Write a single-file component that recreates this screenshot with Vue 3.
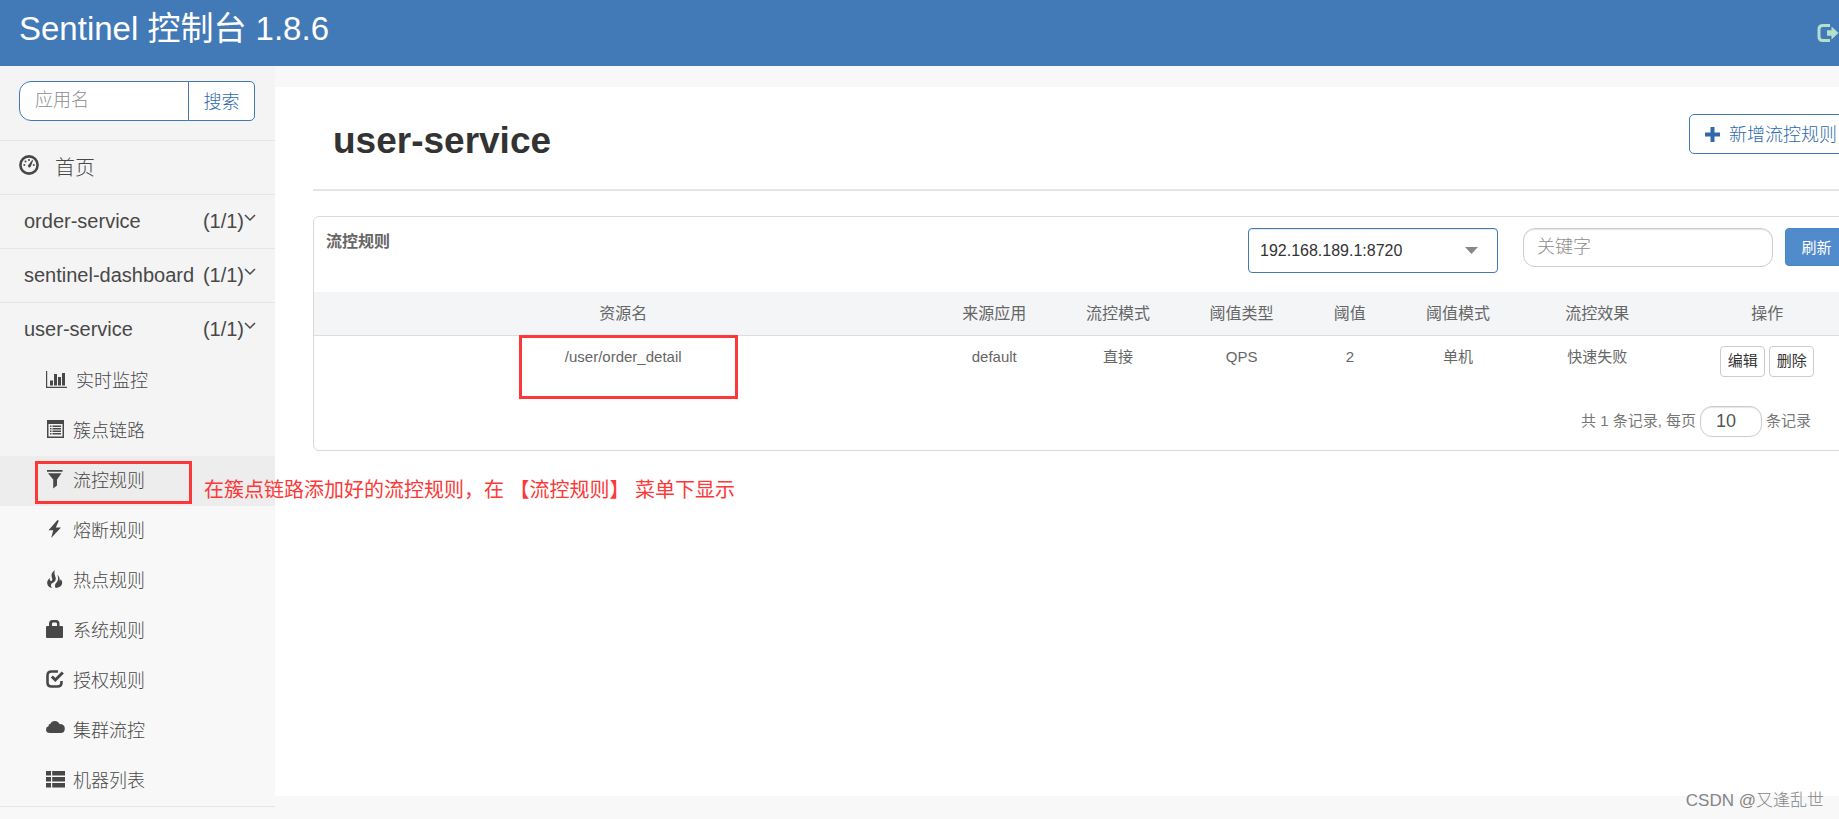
<script setup>
import { ref } from 'vue'

const appKeyword = ref('')
const ruleKeyword = ref('')
const machine = ref('192.168.189.1:8720')
const pageSize = ref('10')

const apps = ['order-service', 'sentinel-dashboard', 'user-service']

const menu = [
  { icon: 'chart', label: '实时监控' },
  { icon: 'listalt', label: '簇点链路' },
  { icon: 'filter', label: '流控规则', active: true },
  { icon: 'flash', label: '熔断规则' },
  { icon: 'fire', label: '热点规则' },
  { icon: 'lock', label: '系统规则' },
  { icon: 'check', label: '授权规则' },
  { icon: 'cloud', label: '集群流控' },
  { icon: 'thlist', label: '机器列表' },
]

const paths = {
  chart: 'M0 1h1.2v15.8H21V18H0zM4 10.500h3v5H4zM8 4h3v11.500H8zM12 7h3v8.500h-3zM16 3h3v12.500h-3z',
  listalt: 'M1 0h17v18H1zM2.500 4v12.500h14V4zM4 5.500h1.500V7H4zM6.500 5.500H15V7H6.500zM4 8h1.500v1.500H4zM6.500 8H15v1.500H6.500zM4 10.500h1.500V12H4zM6.500 10.500H15V12H6.500zM4 13h1.500v1.500H4zM6.500 13H15v1.500H6.500z',
  filter: 'M1 0h15.500v1.800H1zM2 3.200h13.500L11 9.500v6L7.200 18.500v-9z',
  flash: 'M11.500 0L2.500 10.200h4.700L5.200 18 15 7.500H9.800L12.800.8z',
  fire: 'M8.800 0C5.500 2.500 4.800 5 6 8 6.600 9.600 6.200 11 5.200 11 4.100 11 3.600 9.800 3.800 8 1.500 9.800.8 12 1.300 14 1.800 16.300 3.600 17.600 6 18 4.800 16.500 4.600 15 5.600 13.600 7.500 12.500 9.800 11.500 9.800 8.800 9.800 6 7.600 4.500 8.800 0zM11.200 4.800C12.200 7 12.400 9 11.600 10.800 11 12.500 8.800 13.500 9 16 9 17 9.300 17.600 9.800 18 14 17.600 16.300 15.300 16.200 12.500 16.100 10.800 15.400 9.800 14.600 8.900 14.500 10 14.300 10.600 13.700 11 14 8.500 13.200 6.300 11.200 4.800z',
  lock: 'M3 6V3.500Q3 0 6.500 0h3.500Q13.500 0 13.500 3.500V6H16q1 0 1 1v10q0 1-1 1H1q-1 0-1-1V7q0-1 1-1zM6 6h5V3.800Q11 2.500 9.800 2.500H7.200Q6 2.500 6 3.800z',
  cloud: 'M4 13Q0 13 0 9.500 0 6.800 2.500 6.200 2.200 4 4.500 3.800 5.500 1 8.800 1q3.400 0 4.700 3Q18.800 4 18.800 8.500q0 4.500-4.300 4.500z',
  thlist: 'M0 1h5v4.500H0zM6.200 1H19v4.500H6.200zM0 7h5v4.500H0zM6.200 7H19v4.500H6.200zM0 13h5v4.500H0zM6.200 13H19v4.500H6.200z',
}

const columns = [
  { label: '资源名', width: '40%' },
  { label: '来源应用', width: '8%' },
  { label: '流控模式', width: '8%' },
  { label: '阈值类型', width: '8%' },
  { label: '阈值', width: '6%' },
  { label: '阈值模式', width: '8%' },
  { label: '流控效果', width: '10%' },
  { label: '操作', width: '12%' },
]

const rules = [['/user/order_detail', 'default', '直接', 'QPS', '2', '单机', '快速失败']]
</script>

<template>
  <div class="page">
    <header class="topbar">
      <h1 class="brand">Sentinel 控制台 1.8.6</h1>
      <a class="logout" href="#" aria-label="退出">
        <svg width="22" height="18" viewBox="0 0 22 18">
          <path d="M13 1.500H6Q2 1.500 2 5v8q0 3.500 4 3.500h7" fill="none" stroke="currentColor" stroke-width="3" />
          <path d="M10 6.200h4.500V2.500L21.500 9l-7 6.500v-3.700H10z" fill="currentColor" />
        </svg>
      </a>
    </header>

    <div class="body">
      <nav class="sidebar">
        <form class="search" @submit.prevent>
          <input v-model="appKeyword" class="search-input" type="text" placeholder="应用名" aria-label="应用名" />
          <button class="search-button" type="submit">搜索</button>
        </form>

        <a class="home" href="#">
          <svg width="20" height="20" viewBox="0 0 20 20">
            <circle cx="10" cy="10" r="8.600" fill="none" stroke="currentColor" stroke-width="2.600" />
            <path d="M9.200 10.200L13.200 5l.9.600-2.300 5.800q-.8 1.400-2.200.8-1.200-.8-.4-2z" fill="currentColor" />
            <circle cx="5.300" cy="10" r="1" fill="currentColor" />
            <circle cx="6.500" cy="6.500" r="1" fill="currentColor" />
            <circle cx="10" cy="5" r="1" fill="currentColor" />
            <circle cx="14.800" cy="10" r="1" fill="currentColor" />
          </svg>
          <span>首页</span>
        </a>

        <a v-for="app in apps" :key="app" class="app" href="#">
          <span>{{ app }}</span>
          <span class="count">(1/1)</span>
          <svg class="chevron" width="12" height="8" viewBox="0 0 12 8">
            <path d="M1 1l5 5 5-5" fill="none" stroke="currentColor" stroke-width="1.500" />
          </svg>
        </a>

        <ul class="menu">
          <li v-for="item in menu" :key="item.label">
            <a href="#" class="menu-link" :class="{ active: item.active }">
              <svg v-if="item.icon === 'check'" class="icon" width="27" height="19" viewBox="0 0 27 19">
                <path d="M12 1.500H5.500q-4 0-4 4v7q0 4 4 4h6q4 0 4-4V11" fill="none" stroke="currentColor" stroke-width="2.600" />
                <path d="M5.800 6.500l3.500 3.500 7.500-7.500" fill="none" stroke="currentColor" stroke-width="3" />
              </svg>
              <svg v-else-if="item.icon === 'chart'" class="icon" width="30" height="19" viewBox="0 0 30 19">
                <path :d="paths.chart" fill="currentColor" />
              </svg>
              <svg v-else class="icon" width="27" height="19" viewBox="0 0 27 19">
                <path :d="paths[item.icon]" fill="currentColor" fill-rule="evenodd" />
              </svg>
              <span>{{ item.label }}</span>
            </a>
          </li>
        </ul>
      </nav>

      <main class="content">
        <div class="heading">
          <h2 class="title">user-service</h2>
          <button class="add" type="button">
            <svg width="15" height="15" viewBox="0 0 15 15">
              <path d="M5.500 0h4v5.500H15v4H9.500V15h-4V9.500H0v-4h5.500z" fill="currentColor" />
            </svg>
            <span>新增流控规则</span>
          </button>
        </div>

        <section class="card">
          <div class="toolbar">
            <h3 class="card-title">流控规则</h3>
            <div class="machine">
              <select v-model="machine" class="machine-select" aria-label="机器">
                <option>192.168.189.1:8720</option>
              </select>
              <svg class="caret" width="13" height="7" viewBox="0 0 13 7">
                <path d="M0 0h13L6.500 7z" fill="#888" />
              </svg>
            </div>
            <input v-model="ruleKeyword" class="keyword" type="text" placeholder="关键字" aria-label="关键字" />
            <button class="refresh" type="button">刷新</button>
          </div>

          <table class="rules">
            <colgroup>
              <col v-for="c in columns" :key="c.label" :style="{ width: c.width }" />
            </colgroup>
            <thead>
              <tr>
                <th v-for="c in columns" :key="c.label" scope="col">{{ c.label }}</th>
              </tr>
            </thead>
            <tbody>
              <tr v-for="rule in rules" :key="rule[0]">
                <td v-for="value in rule" :key="value">{{ value }}</td>
                <td>
                  <div class="actions">
                    <button type="button">编辑</button>
                    <button type="button">删除</button>
                  </div>
                </td>
              </tr>
            </tbody>
          </table>

          <div class="pager">
            <span>共 1 条记录,</span>
            <label for="page-size">每页</label>
            <input id="page-size" v-model="pageSize" type="text" />
            <span>条记录</span>
          </div>
        </section>
      </main>
    </div>

    <div class="mark mark-menu"></div>
    <div class="mark mark-resource"></div>
    <p class="note">在簇点链路添加好的流控规则，在 【流控规则】 菜单下显示</p>
    <p class="watermark">CSDN @又逢乱世</p>
  </div>
</template>

<style>
body {
  margin: 0;
  background: #f8f8f8;
}
</style>

<style scoped>
.page {
  position: relative;
  display: flex;
  flex-direction: column;
  min-height: 100vh;
  overflow: hidden;
  font-family: "Liberation Sans", "Noto Sans CJK SC", sans-serif;
  color: #555;
}

.page *,
.page {
  box-sizing: border-box;
}

input,
button,
select {
  margin: 0;
  font-family: inherit;
}

a {
  color: inherit;
  text-decoration: none;
}

h1,
h2,
h3,
p,
ul {
  margin: 0;
  padding: 0;
}

.topbar {
  display: flex;
  align-items: center;
  justify-content: space-between;
  height: 66px;
  padding-left: 19px;
  background: #4279b7;
}

.brand {
  padding-bottom: 8px;
  font-size: 33px;
  font-weight: 400;
  line-height: 40px;
  color: #fff;
}

.logout {
  display: flex;
  color: #b5dfca;
}

.body {
  display: flex;
  flex: 1;
}

.sidebar {
  flex: none;
  width: 275px;
  background: linear-gradient(#f4f4f4 440px, transparent 0);
  font-weight: 300;
  color: #484848;
}

.search {
  display: flex;
  height: 74px;
  padding: 15px 20px 19px 19px;
}

.search-input {
  flex: 1;
  width: 0;
  min-width: 0;
  padding: 0 15px 2px;
  border: 1px solid #4279b7;
  border-radius: 12px 0 0 12px;
  background: #fff;
  font-size: 18px;
  outline: none;
}

input::placeholder {
  color: #8c8c8c;
  font-weight: 300;
  opacity: 1;
}

.search-button {
  width: 67px;
  margin-left: -1px;
  padding: 0 0 3px;
  border: 1px solid #4279b7;
  border-radius: 0 5px 5px 0;
  background: #fff;
  font-size: 18px;
  font-weight: 300;
  color: #2f69aa;
}

.home,
.app {
  display: flex;
  align-items: center;
  height: 54px;
  border-top: 1px solid #e5e5e5;
  font-size: 20px;
}

.home {
  gap: 16px;
  padding-left: 19px;
}

.home svg {
  margin-bottom: 6px;
}

.home span {
  padding-bottom: 3px;
}

.app {
  padding: 0 19px 0 24px;
}

.count {
  margin-left: auto;
}

.chevron {
  margin-bottom: 7px;
}

.menu {
  list-style: none;
  border-bottom: 1px solid #e5e5e5;
}

.menu-link {
  display: flex;
  align-items: center;
  height: 50px;
  padding-left: 46px;
  font-size: 18px;
}

.menu-link span {
  padding-bottom: 4px;
}

.menu-link.active {
  background: #ededed;
}

.icon {
  flex: none;
  margin-bottom: 4px;
}

.content {
  flex: 1;
  min-width: 0;
  margin: 21px 0 23px;
  padding-left: 38px;
  background: #fff;
}

.heading {
  display: flex;
  align-items: flex-start;
  justify-content: space-between;
  height: 104px;
  margin-bottom: 25px;
  border-bottom: 2px solid #e5e5e5;
}

.title {
  padding: 33px 0 0 20px;
  font-size: 37px;
  line-height: 42px;
  color: #333;
}

.add {
  display: flex;
  align-items: center;
  gap: 9px;
  height: 40px;
  margin: 27px -14px 0 0;
  padding: 0 15px;
  border: 1px solid #4279b7;
  border-radius: 5px;
  background: #fff;
  font-size: 18px;
  font-weight: 300;
  color: #2f69aa;
}

.add span {
  padding-bottom: 2px;
}

.card {
  margin-right: -22px;
  border: 1px solid #d9d9d9;
  border-radius: 6px;
}

.toolbar {
  display: flex;
  align-items: flex-start;
  height: 75px;
  padding: 11px 12px 0;
}

.card-title {
  margin-right: auto;
  font-size: 16px;
  line-height: 28px;
  color: #666;
}

.machine {
  display: flex;
  position: relative;
  width: 250px;
  height: 45px;
}

.machine-select {
  appearance: none;
  width: 100%;
  padding: 0 40px 0 11px;
  border: 1px solid #4279b7;
  border-radius: 4px;
  background: #fff;
  box-shadow: inset 0 1px 1px rgba(0, 0, 0, 0.1);
  font-size: 16px;
  color: #333;
}

.caret {
  position: absolute;
  top: 19px;
  right: 20px;
  pointer-events: none;
}

.keyword {
  width: 250px;
  height: 39px;
  margin: 0 12px 0 25px;
  padding: 0 13px;
  border: 1px solid #ccc;
  border-radius: 12px;
  background: #fff;
  box-shadow: inset 0 1px 1px rgba(0, 0, 0, 0.1);
  font-size: 18px;
}

.refresh {
  width: 63px;
  height: 38px;
  padding: 0 0 2px;
  border: 1px solid #4a85c5;
  border-radius: 4px;
  background: #508bcb;
  font-size: 15px;
  color: #fff;
}

.rules {
  width: 100%;
  table-layout: fixed;
  border-collapse: collapse;
  text-align: center;
  color: #666;
}

.rules th {
  height: 43px;
  padding: 0 0 2px;
  border-bottom: 1px solid #ddd;
  background: #f3f5f7;
  font-size: 16px;
  font-weight: 400;
}

.rules td {
  padding: 10px 0;
  vertical-align: top;
  font-size: 15px;
  line-height: 22px;
}

.actions {
  display: flex;
  justify-content: center;
  gap: 4px;
}

.actions button {
  width: 45px;
  height: 31px;
  padding: 0 0 3px;
  border: 1px solid #ccc;
  border-radius: 4px;
  background: #fff;
  font-size: 15px;
  color: #333;
}

.pager {
  display: flex;
  align-items: center;
  justify-content: flex-end;
  gap: 4px;
  height: 63px;
  padding: 6px 49px 0 0;
  font-size: 15px;
  color: #777;
}

.pager span,
.pager label {
  padding-bottom: 4px;
}

.pager input {
  width: 62px;
  height: 31px;
  padding: 0 15px;
  border: 1px solid #ccc;
  border-radius: 12px;
  background: #fff;
  box-shadow: inset 0 1px 1px rgba(0, 0, 0, 0.1);
  font-size: 18px;
  color: #555;
}

/* Free-floating annotations over the page */
.mark {
  position: absolute;
  border: 3px solid #fd3838;
  pointer-events: none;
}

.mark-menu {
  top: 461px;
  left: 35px;
  width: 157px;
  height: 43px;
}

.mark-resource {
  top: 335px;
  left: 519px;
  width: 219px;
  height: 64px;
}

.note {
  position: absolute;
  top: 476px;
  left: 204px;
  font-size: 20px;
  line-height: 28px;
  white-space: nowrap;
  color: #fd3838;
}

.watermark {
  position: absolute;
  right: 15px;
  bottom: 6px;
  font-size: 17px;
  font-weight: 300;
  line-height: 24px;
  color: #858585;
}
</style>
